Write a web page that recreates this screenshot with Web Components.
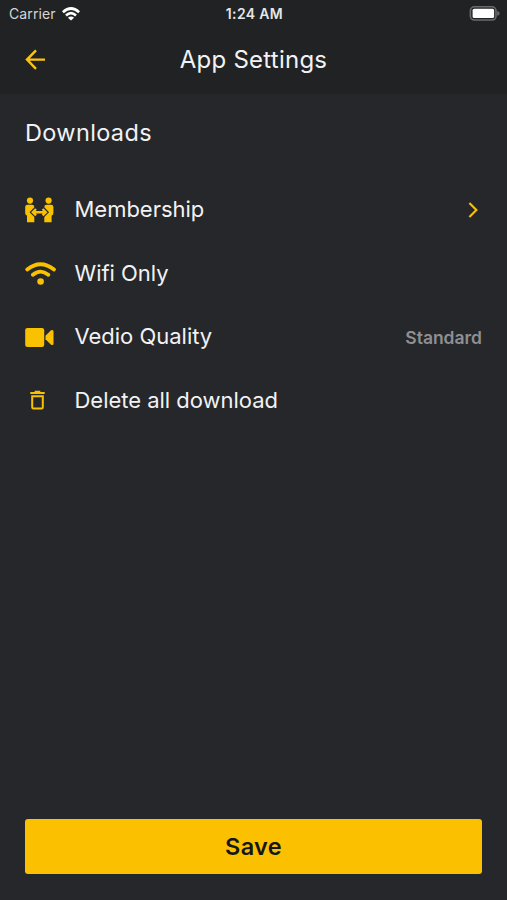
<!DOCTYPE html>
<html lang="en"><head><meta charset="utf-8"><title>App Settings</title>
<style>html,body{margin:0;height:100%;background:#26272b}body{font-family:Inter,"Liberation Sans",sans-serif;color:#f2f2f3;overflow:hidden}</style></head>
<body><settings-screen></settings-screen>
<script>
const define=(name,html)=>customElements.define(name,class extends HTMLElement{
  constructor(){super();this.attachShadow({mode:'open'}).innerHTML=html;}
});
define('status-bar',`<style>
:host{display:grid;grid-template-columns:1fr auto 1fr;align-items:center;height:27px;padding:0 7px 0 9px;line-height:16px;box-sizing:border-box}
.left{display:flex;align-items:center;gap:6px;color:#d6d6d7}.carrier{font-size:14px;letter-spacing:.1px}
.time{font-weight:600;font-size:14px;letter-spacing:.35px;color:#e6e6e7}svg{display:block}.bat{justify-self:end}
</style><div class="left"><span class="carrier">Carrier</span><svg width="18" height="14" viewBox="0 0 18 14" fill="none" stroke="#fff" stroke-width="2.7"><path d="M.9 5.2Q9-2.2 17.1 5.2M4 8.4Q9 3.9 14 8.4"/><path d="M9 13.5L5.9 10.7Q9 8.3 12.1 10.7Z" fill="#fff" stroke="none"/></svg></div>
<span class="time">1:24 AM</span>
<svg class="bat" width="31" height="16" viewBox="0 0 31 16"><rect x="1.4" y=".8" width="25.6" height="13.2" rx="4" fill="none" stroke="#6b6b6d" stroke-width="1.6"/><rect x="3.6" y="2.8" width="21.5" height="9.2" rx="1.5" fill="#fff"/><path d="M28.2 5Q30.6 5.5 30.6 7.4Q30.6 9.3 28.2 9.8Z" fill="#6b6b6d"/></svg>`);
define('app-header',`<style>
:host{display:grid;grid-template-columns:1fr auto 1fr;align-items:center;height:65px;padding:0 25px;box-sizing:border-box}
h1{margin:0;font-size:24px;line-height:30px;font-weight:400;letter-spacing:.25px}svg{display:block}
</style><svg width="22" height="22" viewBox="0 .6 22 22" fill="none" stroke="#fbc415" stroke-width="2.4"><path d="M20 11.2H2.5M11 2L2 11.2L11 20.4"/></svg><h1><slot></slot></h1>`);
define('setting-row',`<style>
:host{display:grid;grid-template-columns:49.5px 1fr auto;align-items:center;height:63.5px}
.label{font-size:22px;line-height:28px;letter-spacing:-.02px;padding-bottom:.6px}
::slotted(svg){display:block}
</style><slot name="icon"></slot><span class="label"><slot></slot></span><slot name="end"></slot>`);
define('save-button',`<style>
:host{display:block;height:55px}button{display:block;width:100%;height:100%;border:0;border-radius:3px;background:#fbc100;color:#151617;font:600 23.5px/28px Inter,sans-serif;letter-spacing:.3px;padding:0}
</style><button type="button"><slot></slot></button>`);
define('settings-screen',`<style>
:host{display:flex;flex-direction:column;height:900px;background:#26272b}
.top{background:#212223;height:94px}main{flex:1;padding:25px 25px 0}
h2{margin:0 0 31px;font-size:23.5px;line-height:28px;font-weight:400;letter-spacing:.35px}
.value{font-size:17.5px;font-weight:600;color:#8e8f92;letter-spacing:-.02px;padding-top:1px}
footer{padding:0 25px 26px}
</style><div class="top"><status-bar></status-bar><app-header>App Settings</app-header></div>
<main><h2>Downloads</h2>
<setting-row><svg slot="icon" width="30" height="26" viewBox="0 0 30 26" fill="#fac100"><circle cx="5" cy="3.6" r="3.1"/><circle cx="23.6" cy="3.6" r="3.1"/><path d="M2.5 7.8H7Q9.3 7.8 9.3 10V25.3H2V18.5Q.2 18 .2 16V10Q.2 7.8 2.5 7.8ZM26.1 7.8H21.6Q19.3 7.8 19.3 10V25.3H26.6V18.5Q28.4 18 28.4 16V10Q28.4 7.8 26.1 7.8Z"/><g fill="none"><path d="M11 12L7.8 15.2L11 18.4M17.6 12L20.8 15.2L17.6 18.4M8 15.2H20.6" stroke="#26272b" stroke-width="4.6"/><path d="M11 12L7.8 15.2L11 18.4M17.6 12L20.8 15.2L17.6 18.4M8 15.2H20.6" stroke="#fac100" stroke-width="2.4"/></g></svg>Membership<svg slot="end" width="15" height="18" viewBox="0 0 15 18" fill="none" stroke="#fac100" stroke-width="2.1"><path d="M2.4 2L9.4 9L2.4 16"/></svg></setting-row>
<setting-row><svg slot="icon" width="32" height="24" viewBox="0 0 32 24" fill="none" stroke="#fac100" stroke-width="3.8" stroke-linecap="round"><path d="M2.2 8.4Q15.5-2 29 8.4M7.9 13.8Q15.5 7.4 23.3 13.8"/><circle cx="15.6" cy="20.5" r="3.3" fill="#fac100" stroke="none"/></svg>Wifi Only</setting-row>
<setting-row><svg slot="icon" width="30" height="22" viewBox="0 -1 30 22" fill="#fac100"><rect x=".2" y="1" width="19" height="19" rx="2.2"/><path d="M20.5 8.8L26 3.3Q28.5 2.2 28.5 4.5V16.5Q28.5 18.8 26 17.7L20.5 12.3Z"/></svg>Vedio Quality<span class="value" slot="end">Standard</span></setting-row>
<setting-row><svg slot="icon" width="25" height="22" viewBox="0 -1 25 22" fill="none" stroke="#fac100" stroke-width="2"><path d="M5.3 3H19.7M9.7 1.7H15.3"/><path d="M7.2 6.2H17.8V17.2Q17.8 18.5 16.5 18.5H8.5Q7.2 18.5 7.2 17.2Z"/></svg>Delete all download</setting-row>
</main><footer><save-button>Save</save-button></footer>`);
</script></body></html>
